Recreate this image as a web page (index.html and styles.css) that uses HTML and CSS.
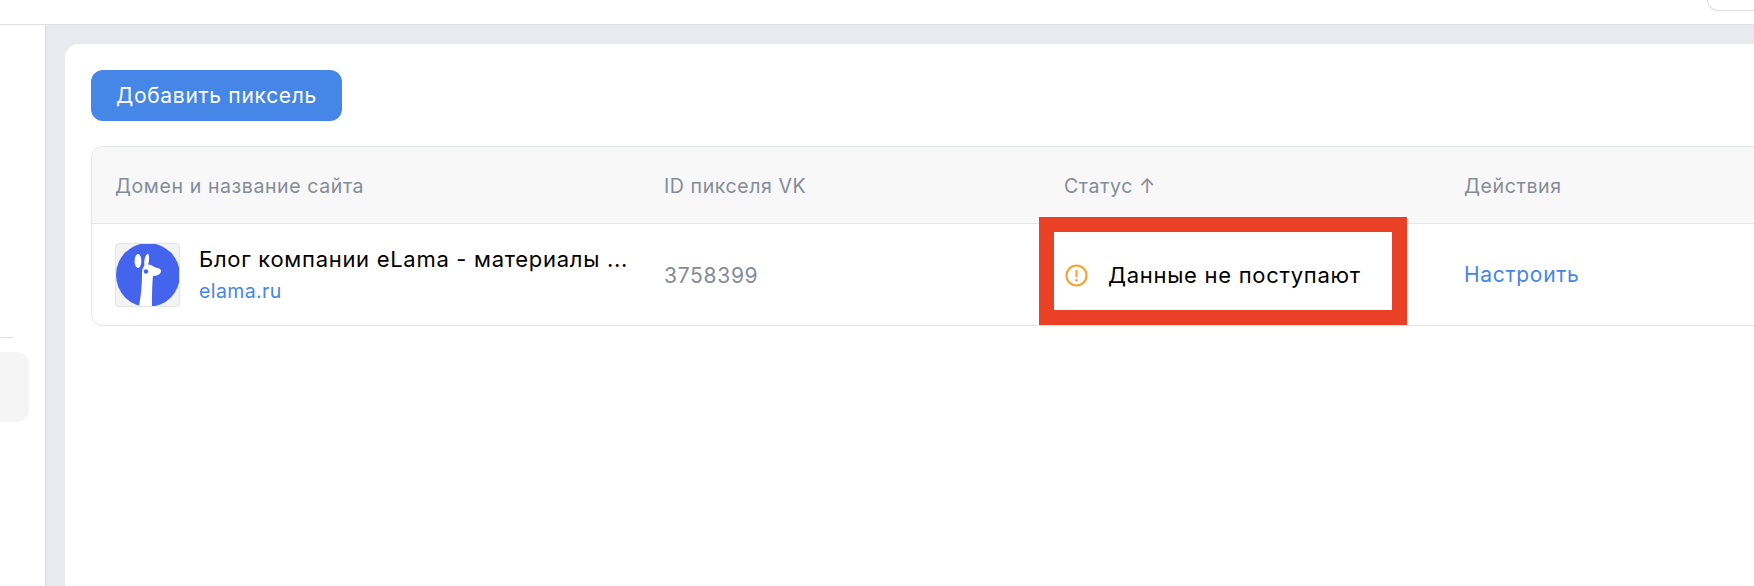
FILE: index.html
```html
<!DOCTYPE html>
<html lang="ru">
<head>
    <meta charset="UTF-8">
    <title>Пиксели</title>
    <link rel="stylesheet" href="styles.css">
</head>
<body>
    <header class="topbar">
        <div class="topbar-box"></div>
    </header>

    <div class="layout">
        <aside class="sidebar">
            <div class="sidebar-line"></div>
            <div class="sidebar-item"></div>
        </aside>

        <main class="content">
            <div class="card">
                <button class="add-button">Добавить пиксель</button>

                <div class="table">
                    <div class="row row-head">
                        <div>Домен и название сайта</div>
                        <div>ID пикселя VK</div>
                        <div>Статус ↑</div>
                        <div>Действия</div>
                    </div>
                    <div class="row row-body">
                        <div class="site">
                            <div class="site-logo">
                                <svg width="64" height="64" viewBox="0 0 64 64">
                                    <circle cx="32" cy="32" r="32" fill="#4464ee"/>
                                    <path d="M23 63.5 C25 52 26 42 26 32 C26 26 27 23 30 22 C33 21 36 22 38 24 C41 25 45 25 45 28 C45 31 41 33 37 33 C36 42 36 54 36 64 C32 64.5 27 64.5 23 63.5 Z" fill="#fff"/>
                                    <ellipse cx="22" cy="18" rx="3.4" ry="7" fill="#fff"/>
                                    <path d="M28.5 23 C27.5 18 29 12 32 10.5 C33.5 13 33.5 19 31.5 23 Z" fill="#fff"/>
                                    <circle cx="30" cy="28.5" r="2.2" fill="#4464ee"/>
                                </svg>
                            </div>
                            <div class="site-text">
                                <div class="site-name">Блог компании eLama - материалы ...</div>
                                <a class="link site-domain">elama.ru</a>
                            </div>
                        </div>
                        <div class="pixel-id">3758399</div>
                        <div class="status">
                            <svg width="23" height="23" viewBox="0 0 22 22">
                                <circle cx="11" cy="11" r="9.6" fill="none" stroke="#f5a23a" stroke-width="2"/>
                                <rect x="10" y="5.5" width="2" height="7.5" rx="1" fill="#f5a23a"/>
                                <circle cx="11" cy="15.6" r="1.2" fill="#f5a23a"/>
                            </svg>
                            <span>Данные не поступают</span>
                        </div>
                        <div><a class="link">Настроить</a></div>
                    </div>

                    <!-- red frame drawn over the screenshot -->
                    <div class="highlight"></div>
                </div>
            </div>
        </main>
    </div>
</body>
</html>
```

FILE: styles.css
```css
html, body {
    margin: 0;
    height: 100%;
    overflow: hidden;
}
body {
    font-family: Inter, "Noto Sans", sans-serif;
    background: #fff;
    color: #000;
    display: flex;
    flex-direction: column;
}
.topbar {
    height: 24px;
    flex: none;
    background: #fff;
    border-bottom: 1px solid #dfe0e5;
    display: flex;
    justify-content: flex-end;
}
.topbar-box {
    width: 46px;
    height: 10px;
    border: 1px solid #dfe0e5;
    border-top: 0;
    border-right: 0;
    border-bottom-left-radius: 12px;
}
.layout {
    flex: 1;
    display: flex;
    min-height: 0;
}
.sidebar {
    width: 45px;
    flex: none;
    background: #fff;
    border-right: 1px solid #dcdde2;
    padding-top: 312px;
}
.sidebar-line {
    width: 13px;
    height: 1px;
    background: #dddde6;
}
.sidebar-item {
    width: 29px;
    height: 70px;
    margin-top: 14px;
    background: #f5f5f5;
    border-radius: 0 12px 12px 0;
}
.content {
    flex: 1;
    background: #e9eaef;
    padding: 19px 0 0 19px;
    min-width: 0;
    overflow: hidden;
}
.card {
    width: 1800px;
    height: 542px;
    background: #fff;
    border-radius: 14px 0 0 0;
    padding: 26px 0 0 26px;
    box-sizing: border-box;
}
.add-button {
    display: block;
    width: 251px;
    height: 51px;
    padding: 0;
    border: 0;
    border-radius: 12px;
    background: #4586e6;
    color: #fff;
    font-family: inherit;
    font-size: 21px;
    letter-spacing: 0.7px;
    cursor: pointer;
}
.table {
    position: relative;
    margin-top: 25px;
    border: 1px solid #e4e5e8;
    border-radius: 12px;
}
.row {
    display: grid;
    grid-template-columns: 549px 400px 400px 1fr;
    align-items: center;
    padding-left: 23px;
}
.row-head {
    height: 77px;
    padding-top: 1px;
    box-sizing: border-box;
    background: #f8f8f8;
    border-bottom: 1px solid #e4e5e8;
    border-radius: 12px 12px 0 0;
    color: #848c99;
    font-size: 19.5px;
    letter-spacing: 0.6px;
}
.row-body {
    height: 101px;
    font-size: 21px;
    letter-spacing: 0.7px;
}
.pixel-id, .status {
    padding-top: 1px;
}
.site {
    display: flex;
    align-items: center;
    gap: 19px;
}
.site-logo {
    width: 65px;
    height: 64px;
    background: #f3f3f3;
    border-radius: 4px;
    outline: 1px solid #e4e4e4;
    outline-offset: -1px;
}
.site-logo svg {
    display: block;
    margin-left: 1px;
}
.site-name {
    width: 440px;
    white-space: nowrap;
    overflow: hidden;
    font-size: 22px;
    line-height: 29px;
}
.site-domain {
    display: block;
    padding-top: 4px;
    font-size: 19.5px;
    letter-spacing: 0.4px;
    line-height: 27px;
}
.link {
    color: #4586e6;
    cursor: pointer;
}
.pixel-id {
    color: #848c99;
}
.status {
    display: flex;
    align-items: center;
    gap: 20px;
    padding-left: 1px;
    font-size: 22px;
}
.highlight {
    position: absolute;
    left: 947px;
    top: 70px;
    width: 338px;
    height: 78px;
    border: 15px solid #ea4025;
}
```
